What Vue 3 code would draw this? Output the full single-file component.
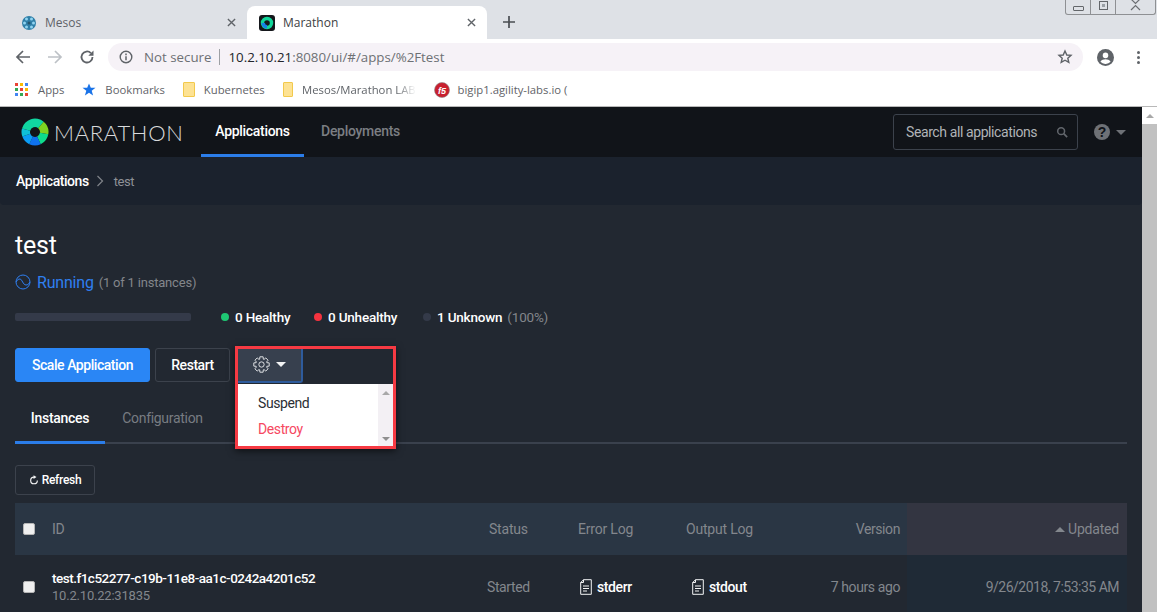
<template>
	<div class="window">
		<div class="tabstrip">
			<div class="tab">
				<svg class="fav" viewBox="0 0 16 16">
					<circle cx="8" cy="8" r="7" fill="#2f7fa8" />
					<g fill="#8fd3f0">
						<circle cx="5.500" cy="4" r="1.500" />
						<circle cx="10.500" cy="4" r="1.500" />
						<circle cx="3.500" cy="8" r="1.500" />
						<circle cx="8" cy="8" r="1.500" fill="#24566e" />
						<circle cx="12.500" cy="8" r="1.500" />
						<circle cx="5.500" cy="12" r="1.500" />
						<circle cx="10.500" cy="12" r="1.500" />
					</g>
				</svg>
				<span class="tab-title">Mesos</span>
				<svg class="tab-close" viewBox="0 0 10 10"><path d="m1 1 8 8M9 1 1 9" stroke="#5f6368" stroke-width="1.500" /></svg>
			</div>
			<div class="tab active">
				<svg class="fav" viewBox="0 0 16 16">
					<rect width="16" height="16" rx="3" fill="#15171b" />
					<circle cx="8" cy="8" r="4.500" fill="none" stroke="#12d69a" stroke-width="3.400" />
					<path d="M2.500 8a5.500 5.500 0 0 0 5.500 5.500V10A2 2 0 0 1 6 8z" fill="#1681e8" />
				</svg>
				<span class="tab-title">Marathon</span>
				<svg class="tab-close" viewBox="0 0 10 10"><path d="m1 1 8 8M9 1 1 9" stroke="#5f6368" stroke-width="1.500" /></svg>
			</div>
			<svg class="new-tab" viewBox="0 0 12 12"><path d="M6 0v12M0 6h12" stroke="#4a4d52" stroke-width="1.700" /></svg>
			<div class="win-controls">
				<span class="win-btn"><i class="win-min"></i></span>
				<span class="win-btn"><i class="win-max"></i></span>
				<span class="win-btn close">
					<svg class="win-x" viewBox="0 0 12 12"><path d="M1 0l4.500 4.500L10 0M1 11l4.500-4.500L10 11" fill="none" stroke="#6b6e72" stroke-width="1.200" /></svg>
				</span>
			</div>
		</div>

		<div class="toolbar">
			<svg class="nav-icon" viewBox="0 0 16 16"><path d="M15 8H2M8 2 2 8l6 6" fill="none" stroke="#5f6368" stroke-width="1.700" /></svg>
			<svg class="nav-icon" viewBox="0 0 16 16"><path d="M1 8h13M8 2l6 6-6 6" fill="none" stroke="#bdc1c6" stroke-width="1.700" /></svg>
			<svg class="nav-icon" viewBox="0 0 16 16">
				<path d="M13.500 8a5.500 5.500 0 1 1-1.600-3.900" fill="none" stroke="#5f6368" stroke-width="1.800" />
				<path d="M14.500 1.500v5.200H9.300z" fill="#5f6368" />
			</svg>
			<div class="omnibox">
				<svg class="info" viewBox="0 0 14 14">
					<circle cx="7" cy="7" r="5.800" fill="none" stroke="#5f6368" stroke-width="1.400" />
					<path d="M7 6.200v4M7 3.600v1.600" stroke="#5f6368" stroke-width="1.500" />
				</svg>
				<span class="not-secure">Not secure</span>
				<span class="omni-sep"></span>
				<span class="url"><b>10.2.10.21</b>:8080/ui/#/apps/%2Ftest</span>
				<svg class="star" viewBox="0 0 16 16"><path d="m8 2 1.800 4 4.200.4-3.200 2.800 1 4.200L8 11.200l-3.800 2.200 1-4.200L2 6.400l4.200-.4z" fill="none" stroke="#5f6368" stroke-width="1.400" /></svg>
			</div>
			<svg class="avatar" viewBox="0 0 16 16">
				<circle cx="8" cy="8" r="8" fill="#5f6368" />
				<circle cx="8" cy="6" r="2.600" fill="#fff" />
				<path d="M3.200 12c1-1.800 3-2.400 4.800-2.400s3.800.6 4.800 2.400A6.200 6.200 0 0 1 8 14a6.200 6.200 0 0 1-4.800-2z" fill="#fff" />
			</svg>
			<div class="kebab"><i></i><i></i><i></i></div>
		</div>

		<div class="bookmarks">
			<span class="bm apps-bm">
				<span class="apps-grid">
					<i v-for="(c, i) in appColors" :key="i" :style="{ backgroundColor: c }"></i>
				</span>
				Apps
			</span>
			<span class="bm">
				<svg class="bm-icon" viewBox="0 0 14 14"><path d="m7 .5 1.800 4.300h4.700L9.700 7.700l1.400 4.800L7 9.700l-4.100 2.800 1.400-4.800L.5 4.800h4.700z" fill="#1a73e8" /></svg>
				Bookmarks
			</span>
			<span class="bm"><i class="folder"></i>Kubernetes</span>
			<span class="bm clipped"><i class="folder"></i>Mesos/Marathon LAB</span>
			<span class="bm f5-bm">
				<svg class="bm-icon f5-icon" viewBox="0 0 16 16">
					<circle cx="8" cy="8" r="7.500" fill="#c8202f" />
					<circle cx="8" cy="8" r="7.500" fill="none" stroke="#8a8a8a" stroke-width=".6" />
					<text x="8" y="11.500" text-anchor="middle" class="f5">f5</text>
				</svg>
				bigip1.agility-labs.io (
			</span>
		</div>

		<div class="app-row">
			<div class="app">
				<header class="navbar">
					<div class="logo">
						<svg class="logo-mark" viewBox="0 0 28 28">
							<path v-for="s in logoSegments" :key="s.color" :d="s.d" :fill="s.color" />
						</svg>
						<span class="logo-text">MARATHON</span>
					</div>
					<nav class="nav-tabs">
						<a class="nav-link active">Applications</a>
						<a class="nav-link">Deployments</a>
					</nav>
					<div class="search">
						<span>Search all applications</span>
						<svg class="search-icon" viewBox="0 0 14 14">
							<circle cx="6" cy="6" r="4" fill="none" stroke="#62666c" stroke-width="1.800" />
							<path d="m9 9 4 4" stroke="#62666c" stroke-width="2" />
						</svg>
					</div>
					<div class="help">
						<span class="help-mark">?</span>
						<i class="caret grey"></i>
					</div>
				</header>

				<div class="crumbs">
					<b>Applications</b>
					<svg class="crumb-sep" viewBox="0 0 8 12"><path d="m1.500 1 5 5-5 5" fill="none" stroke="#80848a" stroke-width="1.200" /></svg>
					<span class="crumb-current">test</span>
				</div>

				<main class="page">
					<h1>test</h1>
					<div class="state">
						<svg class="state-icon" viewBox="0 0 16 16">
							<circle cx="8" cy="8" r="7" fill="none" stroke="#2f7ff0" stroke-width="1" />
							<path d="M1 8C2.500 5.500 3.500 5 5 5c2 0 3 6 6 6 1.500 0 2.500-.5 4-3" fill="none" stroke="#2f7ff0" stroke-width="1" />
						</svg>
						<span class="running">Running</span>
						<span class="muted">(1 of 1 instances)</span>
					</div>
					<div class="health">
						<div class="progress"></div>
						<span class="health-item hi-healthy"><i class="dot green"></i><b>0 Healthy</b></span>
						<span class="health-item hi-unhealthy"><i class="dot red"></i><b>0 Unhealthy</b></span>
						<span class="health-item"><i class="dot dark"></i><b>1 Unknown</b><span class="muted pct">(100%)</span></span>
					</div>
					<div class="actions">
						<button class="btn primary">Scale Application</button>
						<button class="btn restart">Restart</button>
						<div class="gear-wrap">
							<button class="gear-btn">
								<svg class="gear" viewBox="0 0 16 16">
									<path :d="gearPath" fill="none" stroke="#e3e5e8" stroke-width=".9" stroke-linejoin="round" />
									<circle cx="8" cy="8" r="2.500" fill="none" stroke="#e3e5e8" stroke-width=".9" />
								</svg>
								<i class="caret white"></i>
							</button>
							<div class="menu">
								<div class="menu-list">
									<div class="menu-item">Suspend</div>
									<div class="menu-item danger">Destroy</div>
								</div>
								<div class="menu-scroll">
									<i class="arrow up"></i>
									<i class="arrow down"></i>
								</div>
							</div>
							<div class="highlight"></div>
						</div>
					</div>

					<div class="page-tabs">
						<a class="page-tab active">Instances</a>
						<a class="page-tab">Configuration</a>
					</div>

					<button class="btn small">
						<svg class="refresh" viewBox="0 0 12 12">
							<path d="M10 6.500A4 4 0 1 1 6 2.500" fill="none" stroke="#f2f3f4" stroke-width="1.400" />
							<path d="M5.500.2 9 2.500 5.500 4.800z" fill="#f2f3f4" />
						</svg>
						Refresh
					</button>

					<div class="table">
						<div class="t-row t-head">
							<div class="c-check"><i class="check"></i></div>
							<div class="c-id">ID</div>
							<div class="c-status">Status</div>
							<div class="c-err">Error Log</div>
							<div class="c-out">Output Log</div>
							<div class="c-ver">Version</div>
							<div class="c-upd sorted"><i class="sort-up"></i>Updated</div>
						</div>
						<div class="t-row t-body">
							<div class="c-check"><i class="check"></i></div>
							<div class="c-id">
								<div class="inst-id">test.f1c52277-c19b-11e8-aa1c-0242a4201c52</div>
								<div class="inst-host">10.2.10.22:31835</div>
							</div>
							<div class="c-status">Started</div>
							<div class="c-err log"><svg class="doc" viewBox="0 0 12 16"><path d="M3.500.7h7.800v14.600H.7V3.500zM3.500.7v2.800H.7M3 7h6M3 9.500h6M3 12h4" fill="none" stroke="#f2f3f4" stroke-width="1" /></svg>stderr</div>
							<div class="c-out log"><svg class="doc" viewBox="0 0 12 16"><path d="M3.500.7h7.800v14.600H.7V3.500zM3.500.7v2.800H.7M3 7h6M3 9.500h6M3 12h4" fill="none" stroke="#f2f3f4" stroke-width="1" /></svg>stdout</div>
							<div class="c-ver">7 hours ago</div>
							<div class="c-upd">9/26/2018, 7:53:35 AM</div>
						</div>
					</div>
				</main>
			</div>
			<div class="page-scroll">
				<div class="ps-top"><i class="arrow up"></i></div>
				<div class="ps-thumb"></div>
			</div>
		</div>
	</div>
</template>

<script setup>
	const appColors = [
		"#ea4335", "#fbbc04", "#4285f4",
		"#34a853", "#ea4335", "#fbbc04",
		"#4285f4", "#34a853", "#ea4335"
	];

	const point = (cx, cy, r, deg) => {
		const a = (deg * Math.PI) / 180;
		return `${(cx + r * Math.sin(a)).toFixed(2)} ${(cy - r * Math.cos(a)).toFixed(2)}`;
	};

	// ring segments, angles clockwise from 12 o'clock
	const ringSegment = (from, to) => {
		const large = to - from > 180 ? 1 : 0;
		return `M${point(14, 14, 13.5, from)}A13.5 13.5 0 ${large} 1 ${point(14, 14, 13.5, to)}L${point(14, 14, 5, to)}A5 5 0 ${large} 0 ${point(14, 14, 5, from)}Z`;
	};

	const logoSegments = [
		{ d: ringSegment(-75, 40), color: "#10d6a0" },
		{ d: ringSegment(40, 100), color: "#7ed321" },
		{ d: ringSegment(100, 155), color: "#0fdc8c" },
		{ d: ringSegment(155, 205), color: "#0f72ee" },
		{ d: ringSegment(205, 250), color: "#0b9df5" },
		{ d: ringSegment(250, 285), color: "#0fc0d8" }
	];

	const gearPath = (() => {
		const parts = [];
		for (let i = 0; i < 8; i++) {
			const c = i * 45;
			parts.push(point(8, 8, 5.3, c - 22.5 + 4));
			parts.push(point(8, 8, 7.4, c - 12));
			parts.push(point(8, 8, 7.4, c + 12));
			parts.push(point(8, 8, 5.3, c + 22.5 - 4));
		}
		return `M${parts.join("L")}Z`;
	})();
</script>

<style>
	html,
	body {
		margin: 0;
		overflow: hidden;
		background: #fff;
	}
</style>

<style scoped>
	.window {
		width: 1157px;
		height: 612px;
		display: flex;
		flex-direction: column;
		overflow: hidden;
		font-family: Roboto, "Noto Sans", sans-serif;
		letter-spacing: -0.2px;
	}

	/* browser chrome */
	.tabstrip {
		height: 39px;
		flex-shrink: 0;
		display: flex;
		align-items: flex-end;
		background: #dee1e6;
		padding-left: 7px;
		position: relative;
	}
	.tab {
		width: 240px;
		height: 33px;
		display: flex;
		align-items: center;
		padding: 0 8px 0 14px;
		box-sizing: border-box;
		font-family: "Open Sans", sans-serif;
		font-size: 12px;
		letter-spacing: 0;
		color: #5f6368;
	}
	.tab.active {
		background: #fff;
		border-radius: 8px 8px 0 0;
		color: #3c4043;
		padding-left: 12px;
	}
	.fav {
		width: 16px;
		height: 16px;
		margin-right: 8px;
		flex-shrink: 0;
	}
	.tab-title {
		flex: 1;
	}
	.tab-close {
		width: 9px;
		height: 9px;
		margin-right: 3px;
	}
	.new-tab {
		width: 12px;
		height: 12px;
		margin: 0 0 11px 16px;
	}
	.win-controls {
		position: absolute;
		top: 0;
		right: 1px;
		display: flex;
		height: 14px;
		border: 1px solid #8e9093;
		border-top: none;
		border-radius: 0 0 3px 3px;
	}
	.win-btn {
		width: 24px;
		display: flex;
		align-items: center;
		justify-content: center;
		border-right: 1px solid #8e9093;
	}
	.win-btn.close {
		border-right: none;
		width: 39px;
	}
	.win-min {
		width: 9px;
		height: 3px;
		border: 1px solid #63666a;
		border-radius: 1px;
		margin-top: 3px;
	}
	.win-max {
		width: 9px;
		height: 9px;
		border: 1px solid #63666a;
		margin-top: -4px;
		box-sizing: border-box;
		padding: 2px;
		background: content-box #9aa0a6;
	}
	.win-x {
		width: 12px;
		height: 12px;
		margin-top: -4px;
	}

	.toolbar {
		height: 36px;
		flex-shrink: 0;
		display: flex;
		align-items: center;
		background: #fff;
		padding-left: 15px;
		box-sizing: border-box;
	}
	.nav-icon {
		width: 16px;
		height: 16px;
		margin-right: 16px;
		flex-shrink: 0;
	}
	.omnibox {
		width: 975px;
		height: 28px;
		margin-left: -3px;
		display: flex;
		align-items: center;
		background: #f6f2f7;
		border-radius: 14px;
		padding: 0 10px 0 11px;
		box-sizing: border-box;
		font-family: "Open Sans", sans-serif;
		font-size: 13.300px;
		letter-spacing: 0;
		color: #6d7074;
	}
	.info {
		width: 14px;
		height: 14px;
		margin-right: 11px;
	}
	.omni-sep {
		width: 1px;
		height: 16px;
		background: #9da0a4;
		margin: 0 8px;
	}
	.url {
		flex: 1;
	}
	.url b {
		font-weight: 400;
		color: #22252a;
	}
	.star {
		width: 16px;
		height: 16px;
	}
	.avatar {
		width: 17px;
		height: 17px;
		margin-left: 14px;
	}
	.kebab {
		display: flex;
		flex-direction: column;
		gap: 2px;
		margin-left: 23px;
	}
	.kebab i {
		width: 3px;
		height: 3px;
		background: #5f6368;
		border-radius: 50%;
	}

	.bookmarks {
		height: 32px;
		flex-shrink: 0;
		display: flex;
		align-items: center;
		background: #fff;
		border-bottom: 1px solid #b8b8b8;
		padding: 0 0 2px 15px;
		box-sizing: border-box;
		font-family: "Open Sans", sans-serif;
		font-size: 11.300px;
		letter-spacing: 0;
		color: #5f6368;
		gap: 18px;
	}
	.bm {
		display: flex;
		align-items: center;
		gap: 9px;
		white-space: nowrap;
	}
	.apps-bm {
		gap: 10px;
	}
	.clipped {
		width: 133px;
		overflow: hidden;
		-webkit-mask-image: linear-gradient(to right, #000 85%, transparent);
		mask-image: linear-gradient(to right, #000 85%, transparent);
	}
	.f5-bm {
		gap: 8px;
	}
	.apps-grid {
		display: grid;
		grid-template-columns: repeat(3, 3px);
		gap: 2px;
	}
	.apps-grid i {
		width: 3px;
		height: 3px;
	}
	.bm-icon {
		width: 14px;
		height: 14px;
		flex-shrink: 0;
	}
	.f5-icon {
		width: 16px;
		height: 16px;
	}
	.f5 {
		font-family: "Liberation Sans", sans-serif;
		font-size: 9px;
		font-weight: 700;
		font-style: italic;
		fill: #fff;
	}
	.folder {
		width: 12px;
		height: 15px;
		background: #fde293;
		border: 1px solid #f2c94c;
		border-radius: 1px;
		box-sizing: border-box;
	}

	/* marathon ui */
	.app-row {
		flex: 1;
		min-height: 0;
		display: flex;
	}
	.app {
		flex: 1;
		min-width: 0;
		display: flex;
		flex-direction: column;
		background: #222831;
		overflow: hidden;
	}
	.page-scroll {
		width: 15px;
		flex-shrink: 0;
		display: flex;
		flex-direction: column;
		background: #f1f1f1;
	}
	.ps-top {
		height: 17px;
		display: flex;
		align-items: center;
		justify-content: center;
		background: #fff;
	}
	.ps-thumb {
		flex: 1;
		background: #c1c1c1;
	}
	.navbar {
		height: 50px;
		flex-shrink: 0;
		display: flex;
		align-items: stretch;
		background: #111419;
		padding-left: 21px;
		box-sizing: border-box;
	}
	.logo {
		display: flex;
		align-items: center;
		width: 180px;
	}
	.logo-mark {
		width: 28px;
		height: 28px;
		margin-right: 5px;
	}
	.logo-text {
		font-family: "Lato", sans-serif;
		font-weight: 300;
		font-size: 22px;
		letter-spacing: 0.7px;
		color: #d9dadc;
	}
	.nav-tabs {
		display: flex;
	}
	.nav-link {
		width: 103px;
		display: flex;
		align-items: center;
		justify-content: center;
		font-size: 14px;
		font-weight: 500;
		letter-spacing: -0.3px;
		color: #7b7e83;
		box-sizing: border-box;
		border-bottom: 3px solid transparent;
	}
	.nav-link.active {
		color: #fff;
		border-bottom-color: #2b7de9;
	}
	.nav-link + .nav-link {
		width: 113px;
	}
	.search {
		margin: 7px 0 7px auto;
		width: 185px;
		display: flex;
		align-items: center;
		justify-content: space-between;
		border: 1px solid #3c424c;
		border-radius: 3px;
		padding: 0 9px 0 12px;
		box-sizing: border-box;
		font-size: 14px;
		letter-spacing: -0.4px;
		color: #b0b3b7;
	}
	.search-icon {
		width: 12px;
		height: 12px;
	}
	.help {
		width: 64px;
		display: flex;
		align-items: center;
		padding-left: 16px;
		box-sizing: border-box;
		gap: 6px;
	}
	.help-mark {
		width: 16px;
		height: 16px;
		border-radius: 50%;
		background: #6e7176;
		color: #111419;
		font-family: "Liberation Sans", sans-serif;
		font-size: 14px;
		font-weight: 700;
		line-height: 16px;
		text-align: center;
	}
	.caret {
		width: 0;
		height: 0;
		border-left: 5px solid transparent;
		border-right: 5px solid transparent;
	}
	.caret.grey {
		border-top: 5px solid #6e7176;
	}
	.caret.white {
		border-top: 5px solid #f2f3f4;
	}
	.crumbs {
		height: 48px;
		flex-shrink: 0;
		display: flex;
		align-items: center;
		background: #1b222d;
		padding-left: 16px;
		box-sizing: border-box;
		font-size: 14px;
		letter-spacing: -0.45px;
		color: #8e9196;
		border-radius: 0 0 4px 4px;
	}
	.crumbs b {
		color: #fff;
		font-weight: 500;
	}
	.crumb-sep {
		width: 8px;
		height: 12px;
		margin: 0 10px 0 7px;
	}
	.crumb-current {
		font-size: 13px;
	}

	.page {
		flex: 1;
		min-height: 0;
		padding: 0 15px;
	}
	h1 {
		margin: 25px 0 0;
		height: 32px;
		font-size: 25px;
		line-height: 32px;
		font-weight: 400;
		color: #fff;
		letter-spacing: -0.2px;
	}
	.state {
		margin-top: 8px;
		height: 24px;
		display: flex;
		align-items: center;
		font-size: 13px;
	}
	.state-icon {
		width: 16px;
		height: 16px;
		margin-right: 6px;
	}
	.running {
		font-size: 16px;
		color: #2f7ff0;
		margin-right: 5px;
	}
	.muted {
		color: #83868b;
		font-weight: 400;
	}
	.pct {
		margin-left: 5px;
	}
	.health {
		margin-top: 11px;
		height: 24px;
		display: flex;
		align-items: center;
		font-size: 13.500px;
	}
	.progress {
		width: 176px;
		height: 8px;
		border-radius: 2px;
		background: #343a49;
		margin-right: 30px;
	}
	.health-item {
		display: flex;
		align-items: center;
		white-space: pre;
	}
	.hi-healthy {
		width: 93px;
	}
	.hi-unhealthy {
		width: 109px;
	}
	.health-item b {
		font-weight: 500;
		color: #fff;
	}
	.dot {
		width: 8px;
		height: 8px;
		border-radius: 50%;
		margin-right: 6px;
	}
	.dot.green {
		background: #1ec773;
	}
	.dot.red {
		background: #f5333f;
	}
	.dot.dark {
		background: #343a49;
	}
	.actions {
		margin-top: 19px;
		height: 34px;
		display: flex;
		align-items: flex-start;
		gap: 5px;
	}
	.btn {
		height: 34px;
		padding: 0 16px;
		border: 1px solid #3c424c;
		border-radius: 3px;
		background: transparent;
		color: #fff;
		font-family: inherit;
		font-size: 14px;
		font-weight: 500;
		letter-spacing: -0.45px;
		display: flex;
		align-items: center;
		justify-content: center;
		box-sizing: border-box;
	}
	.btn.primary {
		width: 135px;
		padding: 0;
		background: #2a86f5;
		border-color: #2a86f5;
	}
	.btn.restart {
		width: 75px;
		padding: 0;
	}
	.btn.small {
		margin-top: 21px;
		width: 80px;
		height: 30px;
		padding: 0;
		font-size: 12px;
		letter-spacing: -0.3px;
		gap: 3px;
	}
	.refresh {
		width: 10px;
		height: 10px;
	}
	.gear-wrap {
		position: relative;
		margin-left: 3px;
	}
	.gear-btn {
		width: 65px;
		height: 35px;
		padding: 0;
		display: flex;
		align-items: center;
		justify-content: center;
		gap: 6px;
		background: #37404e;
		border: none;
		border-right: 2px solid #2e5b9c;
		border-bottom: 2px solid #2e5b9c;
		border-radius: 0 0 3px 0;
		box-sizing: border-box;
	}
	.gear {
		width: 17px;
		height: 17px;
	}
	.menu {
		position: absolute;
		top: 36px;
		left: 0;
		width: 155px;
		height: 62px;
		display: flex;
		background: #fff;
		color: #2b2e33;
		font-size: 14px;
		letter-spacing: -0.4px;
	}
	.menu-list {
		flex: 1;
		padding: 6px 0 0 20px;
	}
	.menu-item {
		height: 26px;
		line-height: 26px;
	}
	.menu-item.danger {
		color: #f6485f;
	}
	.menu-scroll {
		width: 15px;
		display: flex;
		flex-direction: column;
		justify-content: space-between;
		align-items: center;
		padding: 7px 0 5px;
		box-sizing: border-box;
		background: #f3f0f4;
	}
	.arrow {
		width: 0;
		height: 0;
		border-left: 4px solid transparent;
		border-right: 4px solid transparent;
	}
	.arrow.up {
		border-bottom: 4px solid #a8a8a8;
	}
	.arrow.down {
		border-top: 4px solid #8f8f8f;
	}
	.highlight {
		position: absolute;
		top: -2px;
		left: -3px;
		width: 161px;
		height: 103px;
		border: 3px solid #f63a43;
		box-sizing: border-box;
		box-shadow: 0 2px 7px rgba(0, 0, 0, 0.6);
		pointer-events: none;
	}
	.page-tabs {
		margin-top: 14px;
		height: 48px;
		display: flex;
		box-sizing: border-box;
		border-bottom: 2px solid #3a414d;
		font-size: 14px;
		letter-spacing: -0.3px;
	}
	.page-tab {
		display: flex;
		align-items: center;
		justify-content: center;
		width: 90px;
		height: 48px;
		padding-bottom: 4px;
		box-sizing: border-box;
		color: #787c82;
		font-weight: 400;
	}
	.page-tab + .page-tab {
		width: 115px;
	}
	.page-tab.active {
		color: #fff;
		font-weight: 500;
		padding-bottom: 1px;
		border-bottom: 3px solid #2b7de9;
	}
	.table {
		margin-top: 8px;
		width: 1112px;
		font-size: 14px;
	}
	.t-row {
		display: flex;
		align-items: center;
	}
	.t-head {
		height: 52px;
		background: #2a3644;
		color: #83878d;
	}
	.t-body {
		height: 64px;
		color: #83878d;
	}
	.c-check {
		width: 37px;
		padding-left: 8px;
		box-sizing: border-box;
		display: flex;
	}
	.check {
		width: 10px;
		height: 10px;
		border: 1px solid #b5b5b5;
		border-radius: 2px;
		background: #efefef;
	}
	.c-id {
		width: 422px;
	}
	.c-status {
		width: 104px;
		padding-left: 15px;
		box-sizing: border-box;
	}
	.t-body .c-status {
		padding-left: 13px;
		letter-spacing: -0.4px;
	}
	.c-err {
		width: 108px;
		box-sizing: border-box;
	}
	.c-out {
		width: 100px;
		box-sizing: border-box;
	}
	.t-body .c-out {
		padding-left: 4px;
	}
	.c-ver {
		width: 121px;
		text-align: right;
		padding-right: 7px;
		box-sizing: border-box;
		letter-spacing: -0.4px;
	}
	.c-upd {
		flex: 1;
		height: 100%;
		display: flex;
		align-items: center;
		justify-content: flex-end;
		padding-right: 8px;
		background: #1f2a36;
		letter-spacing: -0.5px;
	}
	.c-upd.sorted {
		background: #333541;
		letter-spacing: -0.2px;
	}
	.sort-up {
		width: 0;
		height: 0;
		border-left: 5px solid transparent;
		border-right: 5px solid transparent;
		border-bottom: 5px solid #83878d;
		margin-right: 3px;
	}
	.inst-id {
		color: #fff;
		font-size: 13.500px;
		font-weight: 500;
		letter-spacing: -0.5px;
		line-height: 17px;
	}
	.inst-host {
		font-size: 13px;
		line-height: 17px;
	}
	.log {
		display: flex;
		align-items: center;
		color: #fff;
		font-weight: 500;
		letter-spacing: -0.4px;
	}
	.doc {
		width: 12px;
		height: 16px;
		margin: 0 5px 0 2px;
	}
</style>
